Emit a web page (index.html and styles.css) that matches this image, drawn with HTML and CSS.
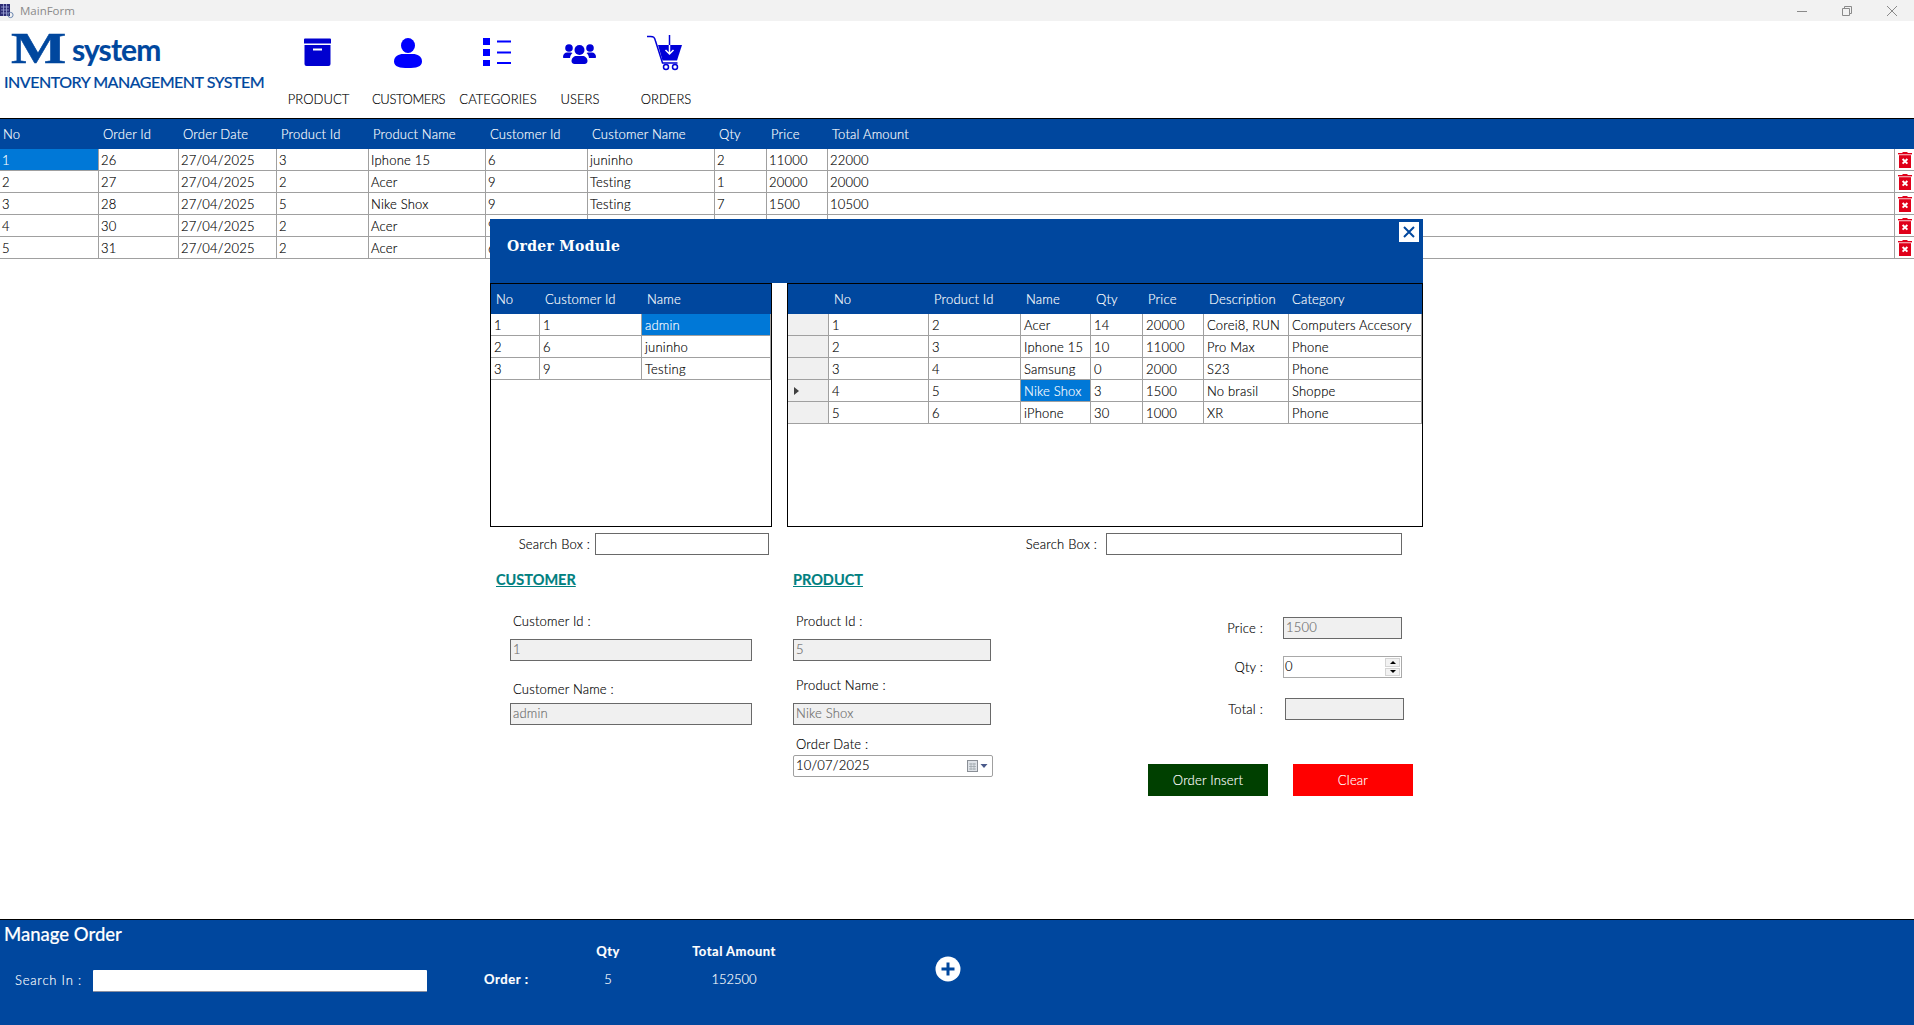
FILE: index.html
```html
<!DOCTYPE html>
<html lang="en">
<head>
<meta charset="utf-8">
<title>MainForm</title>
<link rel="stylesheet" href="styles.css">
</head>
<body>
<svg class="defs" width="0" height="0" aria-hidden="true">
  <symbol id="trash" viewBox="0 0 14 16">
    <rect x="4.5" y="0" width="5" height="1" fill="#e0001a"/>
    <rect x="0" y="1" width="14" height="1.4" fill="#e0001a"/>
    <rect x="1" y="3.2" width="12" height="12.8" fill="#e0001a"/>
    <path d="M4.6 7l4.8 4.6M9.4 7l-4.8 4.6" stroke="#fff" stroke-width="2" fill="none"/>
  </symbol>
</svg>
<div class="titlebar">
  <svg class="app-icon" viewBox="0 0 14 16"><rect x="0" y="1" width="10" height="12" fill="#2c2c74"/><path d="M1 4h8M1 7h8M1 10h8M3.500 1v12M6.500 1v12" stroke="#9fa6d8" stroke-width=".8"/><circle cx="10.500" cy="12" r="2.600" fill="none" stroke="#6a86b0"/></svg>
  <span class="app-name">MainForm</span>
  <div class="win-controls">
    <svg viewBox="0 0 10 10"><path d="M0 5.500h10" stroke="#8a8a8a"/></svg>
    <svg viewBox="0 0 10 10"><path d="M.5 2.500h7v7h-7zM2.500 2.500v-2h7v7h-2" fill="none" stroke="#8a8a8a"/></svg>
    <svg viewBox="0 0 10 10"><path d="M0 0l10 10M10 0L0 10" stroke="#8a8a8a"/></svg>
  </div>
</div>
<header class="topbar">
  <div class="brand">
    <div class="logo"><span class="logo-m">M</span><span class="logo-word">system</span></div>
    <div class="tagline">INVENTORY MANAGEMENT SYSTEM</div>
  </div>
  <nav class="nav">
    <div class="nav-item w-product">
      <svg class="nav-icon" width="29" height="28" viewBox="0 0 29 28"><path d="M1 1.500a1 1 0 0 1 1-1h25a1 1 0 0 1 1 1v4H1z" fill="#0000d0"/><path d="M1.500 7h26v19a2 2 0 0 1-2 2h-22a2 2 0 0 1-2-2z" fill="#0000d0"/><rect x="10" y="10.500" width="9" height="2" fill="#fff"/></svg>
      <span class="nav-label">PRODUCT</span>
    </div>
    <div class="nav-item w-customers">
      <svg class="nav-icon" width="28" height="30" viewBox="0 0 28 30"><ellipse cx="14" cy="7.500" rx="7" ry="7.500" fill="#0000ff"/><path d="M0 23.500C0 18 5 16 9 16h10c4 0 9 2 9 7.500S22 30 14 30 0 29 0 23.500z" fill="#0000ff"/></svg>
      <span class="nav-label nav-tight">CUSTOMERS</span>
    </div>
    <div class="nav-item w-categories">
      <svg class="nav-icon" width="28" height="28" viewBox="0 0 28 28"><path d="M0 0h7v7H0zM0 11h7v7H0zM0 22h7v6H0z" fill="#0000ff"/><path d="M14 3.500h14M14 14.500h14M14 25h14" stroke="#0000ff" stroke-width="2"/></svg>
      <span class="nav-label">CATEGORIES</span>
    </div>
    <div class="nav-item w-users">
      <svg class="nav-icon" width="33" height="20" viewBox="0 0 33 20"><circle cx="6" cy="4" r="3.800" fill="#0000d8"/><circle cx="27" cy="4" r="3.800" fill="#0000d8"/><circle cx="16.500" cy="6" r="5" fill="#0000d8"/><path d="M0 13c0-3 2-4.500 4-4.500h4c.6 0 1 .2 1.500.5-1.500 1.200-2.300 3-2.500 5H1c-.6 0-1-.4-1-1zM33 13c0-3-2-4.500-4-4.500h-4c-.6 0-1 .2-1.500.5 1.500 1.200 2.300 3 2.500 5h6c.6 0 1-.4 1-1z" fill="#0000d8"/><path d="M8.500 17c0-3 2.500-5 5-5h6c2.500 0 5 2 5 5 0 2-1.500 3-3 3h-10c-1.500 0-3-1-3-3z" fill="#0000d8"/></svg>
      <span class="nav-label">USERS</span>
    </div>
    <div class="nav-item w-orders">
      <svg class="nav-icon" width="36" height="36" viewBox="0 0 36 36"><path d="M0 1.500h3.500c3 0 4 .5 5 4.500l7 22h15" fill="none" stroke="#0000d8" stroke-width="1.500"/><path d="M11 10h24l-5 15.500H15.500z" fill="#0000d8"/><path d="M22.500 0v10" stroke="#0000d8" stroke-width="1.500"/><path d="M22.500 10v9M18.500 15l4 4 4-4" fill="none" stroke="#fff" stroke-width="1.500"/><circle cx="19" cy="32" r="2.500" fill="none" stroke="#0000d8" stroke-width="1.500"/><circle cx="28" cy="32" r="2.500" fill="none" stroke="#0000d8" stroke-width="1.500"/></svg>
      <span class="nav-label">ORDERS</span>
    </div>
  </nav>
</header>
<main class="content">
  <table class="grid main-grid">
    <colgroup><col class="m1"><col class="m2"><col class="m3"><col class="m4"><col class="m5"><col class="m6"><col class="m7"><col class="m8"><col class="m9"><col><col class="m11"></colgroup>
    <thead><tr><th>No</th><th>Order Id</th><th>Order Date</th><th>Product Id</th><th>Product Name</th><th>Customer Id</th><th>Customer Name</th><th>Qty</th><th>Price</th><th>Total Amount</th><th></th></tr></thead>
    <tbody>
      <tr><td class="sel">1</td><td>26</td><td>27/04/2025</td><td>3</td><td>Iphone 15</td><td>6</td><td>juninho</td><td>2</td><td>11000</td><td>22000</td><td class="del"><svg class="trash"><use href="#trash"/></svg></td></tr>
      <tr><td>2</td><td>27</td><td>27/04/2025</td><td>2</td><td>Acer</td><td>9</td><td>Testing</td><td>1</td><td>20000</td><td>20000</td><td class="del"><svg class="trash"><use href="#trash"/></svg></td></tr>
      <tr><td>3</td><td>28</td><td>27/04/2025</td><td>5</td><td>Nike Shox</td><td>9</td><td>Testing</td><td>7</td><td>1500</td><td>10500</td><td class="del"><svg class="trash"><use href="#trash"/></svg></td></tr>
      <tr><td>4</td><td>30</td><td>27/04/2025</td><td>2</td><td>Acer</td><td>9</td><td></td><td></td><td></td><td></td><td class="del"><svg class="trash"><use href="#trash"/></svg></td></tr>
      <tr><td>5</td><td>31</td><td>27/04/2025</td><td>2</td><td>Acer</td><td>6</td><td></td><td></td><td></td><td></td><td class="del"><svg class="trash"><use href="#trash"/></svg></td></tr>
    </tbody>
  </table>
  <section class="modal">
    <div class="modal-head">
      <h2 class="modal-title">Order Module</h2>
      <div class="modal-close"><svg width="12" height="12" viewBox="0 0 12 12"><path d="M1 1l10 10M11 1L1 11" stroke="#00479e" stroke-width="2"/></svg></div>
    </div>
    <div class="panels">
      <div class="panel panel-left">
        <table class="grid">
          <colgroup><col class="c1"><col class="c2"><col></colgroup>
          <thead><tr><th>No</th><th>Customer Id</th><th>Name</th></tr></thead>
          <tbody>
            <tr><td>1</td><td>1</td><td class="sel">admin</td></tr>
            <tr><td>2</td><td>6</td><td>juninho</td></tr>
            <tr><td>3</td><td>9</td><td>Testing</td></tr>
          </tbody>
        </table>
      </div>
      <div class="panel panel-right">
        <table class="grid">
          <colgroup><col class="p0"><col class="p1"><col class="p2"><col class="p3"><col class="p4"><col class="p5"><col class="p6"><col></colgroup>
          <thead><tr><th></th><th>No</th><th>Product Id</th><th>Name</th><th>Qty</th><th>Price</th><th>Description</th><th class="th-cat">Category</th></tr></thead>
          <tbody>
            <tr><td class="rowh"></td><td>1</td><td>2</td><td>Acer</td><td>14</td><td>20000</td><td>Corei8, RUN</td><td>Computers Accesory</td></tr>
            <tr><td class="rowh"></td><td>2</td><td>3</td><td>Iphone 15</td><td>10</td><td>11000</td><td>Pro Max</td><td>Phone</td></tr>
            <tr><td class="rowh"></td><td>3</td><td>4</td><td>Samsung</td><td>0</td><td>2000</td><td>S23</td><td>Phone</td></tr>
            <tr><td class="rowh"><span class="row-arrow"></span></td><td>4</td><td>5</td><td class="sel">Nike Shox</td><td>3</td><td>1500</td><td>No brasil</td><td>Shoppe</td></tr>
            <tr><td class="rowh"></td><td>5</td><td>6</td><td>iPhone</td><td>30</td><td>1000</td><td>XR</td><td>Phone</td></tr>
          </tbody>
        </table>
      </div>
    </div>
    <div class="search-row">
      <div class="search search-left"><label class="lbl">Search Box :</label><div class="input input-search-l"></div></div>
      <div class="search search-right"><label class="lbl">Search Box :</label><div class="input input-search-r"></div></div>
    </div>
    <div class="form">
      <div class="col-customer">
        <h3 class="section-title">CUSTOMER</h3>
        <label class="lbl f-lbl first">Customer Id :</label>
        <div class="input ro w-cust first-in">1</div>
        <label class="lbl f-lbl second">Customer Name :</label>
        <div class="input ro w-cust">admin</div>
      </div>
      <div class="col-product">
        <h3 class="section-title">PRODUCT</h3>
        <label class="lbl f-lbl first">Product Id :</label>
        <div class="input ro w-prod first-in">5</div>
        <label class="lbl f-lbl p-second">Product Name :</label>
        <div class="input ro w-prod first-in">Nike Shox</div>
        <label class="lbl f-lbl p-third">Order Date :</label>
        <div class="date">10/07/2025
          <span class="date-btn">
            <svg width="22" height="13" viewBox="0 0 22 13"><rect x=".5" y=".5" width="10" height="11" fill="#dfe3e8" stroke="#8a8f96"/><path d="M2 4h7M2 6.500h7M2 9h7M4 3v7M7 3v7" stroke="#9aa0a8" stroke-width=".7"/><path d="M13.500 4h7l-3.500 4z" fill="#4a5a8a"/></svg>
          </span>
        </div>
      </div>
      <div class="col-totals">
        <div class="tot-row tot-price"><label class="lbl tot-lbl">Price :</label><div class="input ro w-tot">1500</div></div>
        <div class="tot-row tot-qty"><label class="lbl tot-lbl">Qty :</label>
          <div class="input spin w-tot">0
            <span class="spin-btns"><span class="spin-up"></span><span class="spin-down"></span></span>
          </div>
        </div>
        <div class="tot-row tot-total"><label class="lbl tot-lbl">Total :</label><div class="input ro w-tot shift"></div></div>
        <div class="actions">
          <button class="btn btn-green" type="button">Order Insert</button>
          <button class="btn btn-red" type="button">Clear</button>
        </div>
      </div>
    </div>
  </section>
</main>
<footer class="footer">
  <div class="manage-title">Manage Order</div>
  <div class="footer-body">
    <div class="foot-search"><label class="foot-lbl">Search In :</label><div class="foot-input"></div></div>
    <div class="foot-order">Order :</div>
    <div class="foot-stat stat-qty"><span class="stat-head">Qty</span><span class="stat-val">5</span></div>
    <div class="foot-stat stat-total"><span class="stat-head">Total Amount</span><span class="stat-val">152500</span></div>
    <svg class="foot-add" width="26" height="26" viewBox="0 0 26 26"><circle cx="13" cy="13" r="12.500" fill="#fff"/><path d="M13 6.500v13M6.500 13h13" stroke="#00479e" stroke-width="3"/></svg>
  </div>
</footer>
</body>
</html>
```
FILE: styles.css
```css
* { box-sizing: border-box; }
html, body { margin: 0; height: 100%; }
body {
  display: flex;
  flex-direction: column;
  height: 1025px;
  overflow: hidden;
  background: #fff;
  color: #000;
  font-family: Lato, "Liberation Sans", sans-serif;
  font-size: 13px;
  font-weight: 300;
  letter-spacing: .2px;
  -webkit-text-stroke: .15px;
}
.defs { position: absolute; }

.titlebar {
  flex: 0 0 21px;
  display: flex;
  align-items: center;
  background: #f2f2f2;
  color: #8a8a8a;
  font-family: "Open Sans", sans-serif;
  font-size: 11.500px;
  font-weight: 400;
  letter-spacing: 0;
  -webkit-text-stroke: 0;
}
.app-icon { width: 14px; height: 16px; margin-right: 6px; }
.win-controls { margin-left: auto; display: flex; gap: 35px; margin-right: 17px; }
.win-controls svg { width: 10px; height: 10px; }

.topbar { flex: 0 0 97px; display: flex; }
.brand { width: 273px; padding-left: 4px; }
.logo { display: flex; align-items: flex-end; height: 46px; color: #00479e; }
.logo-m {
  font-family: "Liberation Serif", serif;
  font-weight: 700;
  font-size: 45px;
  line-height: 38px;
  width: 69px;
  text-align: center;
  display: inline-block;
  letter-spacing: 0;
  -webkit-text-stroke: .5px;
  transform: scaleX(1.3);
}
.logo-word {
  font-weight: 700;
  font-size: 30px;
  line-height: 37px;
  letter-spacing: -.9px;
  margin-bottom: -1px;
  margin-left: -1px;
}
.tagline {
  margin-top: 7px;
  color: #00479e;
  font-size: 16px;
  font-weight: 500;
  line-height: 16px;
  letter-spacing: -.5px;
  white-space: nowrap;
}
.nav { display: flex; }
.nav-item { position: relative; display: flex; flex-direction: column; align-items: center; height: 97px; }
.w-product { width: 91px; }
.w-customers { width: 89px; }
.w-categories { width: 90px; }
.w-users { width: 74px; }
.w-orders { width: 98px; }
.nav-icon { position: absolute; top: 17px; margin-left: -2px; }
.w-users .nav-icon { top: 23px; }
.w-orders .nav-icon { top: 14px; }
.nav-label { margin-top: 70px; line-height: 16px; font-size: 13px; letter-spacing: .05px; }
.nav-tight { letter-spacing: -.4px; }

.content { position: relative; flex: 1 1 auto; border-top: 1px solid #000; min-height: 0; }

.grid { width: 100%; border-collapse: separate; border-spacing: 0; table-layout: fixed; font-size: 13px; }
.grid th {
  height: 30px;
  padding: 0 0 0 5px;
  background: #00479e;
  color: #fff;
  font-weight: 300;
  text-align: left;
  white-space: nowrap;
}
.main-grid th { padding-left: 4px; }
.main-grid th:first-child { padding-left: 3px; }
.grid th.th-cat { padding-left: 3px; }
.grid td {
  height: 22px;
  padding: 0 0 0 3px;
  border-right: 1px solid #a0a0a0;
  border-bottom: 1px solid #a0a0a0;
  white-space: nowrap;
  overflow: hidden;
  line-height: 20px;
}
.main-grid td { padding-left: 2px; }
.grid td.sel { background: #0078d7; color: #fff; }
.grid td.rowh { background: #f0f0f0; padding: 0; position: relative; }
.row-arrow {
  display: block;
  width: 0;
  height: 0;
  margin-left: 6px;
  border-left: 5px solid #404040;
  border-top: 4px solid transparent;
  border-bottom: 4px solid transparent;
}
.grid td.del { padding: 0; border-right: 0; }
.trash { display: block; width: 14px; height: 16px; margin-left: 3px; }

.m1 { width: 99px; } .m2 { width: 80px; } .m3 { width: 98px; } .m4 { width: 92px; }
.m5 { width: 117px; } .m6 { width: 102px; } .m7 { width: 127px; } .m8 { width: 52px; }
.m9 { width: 61px; } .m11 { width: 19px; }

.c1 { width: 49px; } .c2 { width: 102px; }
.p0 { width: 41px; } .p1 { width: 100px; } .p2 { width: 92px; } .p3 { width: 70px; }
.p4 { width: 52px; } .p5 { width: 61px; } .p6 { width: 85px; }

.modal {
  position: absolute;
  left: 490px;
  top: 100px;
  width: 933px;
  height: 610px;
  background: #fff;
}
.modal-head { position: relative; height: 64px; background: #00479e; padding: 17px 0 0 17px; }
.modal-title {
  margin: 0;
  color: #fff;
  font-family: "DejaVu Serif", serif;
  font-size: 14px;
  font-weight: 700;
  line-height: 20px;
  letter-spacing: .3px;
  -webkit-text-stroke: 0;
}
.modal-close {
  position: absolute;
  right: 4px;
  top: 3px;
  width: 20px;
  height: 20px;
  background: #fff;
  display: flex;
  align-items: center;
  justify-content: center;
}
.panels { display: flex; gap: 15px; height: 244px; }
.panel { border: 1px solid #000; height: 100%; overflow: hidden; }
.panel-left { width: 282px; }
.panel-right { width: 636px; }

.lbl { font-size: 13px; line-height: 16px; white-space: nowrap; display: block; }
.input {
  height: 22px;
  border: 1px solid #696969;
  background: #fff;
  font-size: 13px;
  line-height: 18px;
  padding-left: 2px;
}
.ro { background: #f0f0f0; color: #6d6d6d; }

.search-row { display: flex; margin-top: 6px; height: 22px; }
.search { display: flex; align-items: center; justify-content: flex-end; gap: 5px; }
.search-left { width: 297px; padding-right: 18px; }
.search-right { width: 636px; padding-right: 21px; gap: 9px; }
.input-search-l { width: 174px; }
.input-search-r { width: 296px; }

.form { display: flex; }
.col-customer { width: 297px; padding-left: 6px; }
.col-product { width: 213px; padding-left: 6px; }
.col-totals { flex: 1; }
.section-title {
  margin: 17px 0 0;
  color: #008080;
  font-size: 14.500px;
  line-height: 16px;
  font-weight: 700;
  letter-spacing: 0;
  text-decoration: underline;
}
.f-lbl { margin-left: 17px; }
.col-product .f-lbl { margin-left: 3px; }
.first { margin-top: 25px; }
.first-in { margin-top: 10px; }
.second { margin-top: 20px; margin-bottom: 6px; }
.p-second { margin-top: 16px; }
.p-third { margin-top: 11px; margin-bottom: 3px; }
.w-cust { width: 242px; margin-left: 14px; }
.w-prod { width: 198px; }
.date {
  position: relative;
  width: 200px;
  height: 22px;
  border: 1px solid #a0a0a0;
  border-radius: 2px;
  font-size: 13px;
  line-height: 19px;
  padding-left: 2px;
}
.date-btn { position: absolute; right: 3px; top: 4px; display: flex; }

.tot-row { display: flex; align-items: center; height: 22px; }
.tot-lbl { width: 263px; text-align: right; margin: 0 20px 1px 0; }
.tot-price { margin-top: 62px; }
.tot-qty { margin-top: 17px; }
.tot-total { margin-top: 20px; }
.w-tot { width: 119px; }
.shift { margin-left: 2px; }
.spin { position: relative; border-color: #a9a9a9; padding-left: 1px; }
.spin-btns { position: absolute; right: 1px; top: 1px; width: 15px; height: 18px; display: flex; flex-direction: column; gap: 1px; }
.spin-up, .spin-down {
  flex: 1;
  display: flex;
  align-items: center;
  justify-content: center;
  background: #f2f2f2;
  border: 1px solid #d4d4d4;
}
.spin-up::after { content: ""; border: 3px solid transparent; border-bottom: 3px solid #000; border-top: 0; }
.spin-down::after { content: ""; border: 3px solid transparent; border-top: 3px solid #000; border-bottom: 0; }

.actions { display: flex; gap: 25px; margin: 44px 0 0 148px; }
.btn {
  width: 120px;
  height: 32px;
  border: 0;
  color: #fff;
  font-family: inherit;
  font-size: 13px;
  font-weight: 300;
  letter-spacing: .2px;
  padding: 0;
}
.btn-green { background: #004000; }
.btn-red { background: #ff0000; }

.footer {
  flex: 0 0 106px;
  border-top: 1px solid #000;
  background: #00479e;
  color: #fff;
  position: relative;
}
.manage-title { padding: 4px 0 0 4px; font-size: 18.500px; line-height: 20px; font-weight: 500; letter-spacing: 0; }
.footer-body { display: flex; margin-top: -1px; height: 52px; position: relative; }
.foot-search { display: flex; align-items: center; margin: 27px 0 0 15px; gap: 11px; height: 22px; }
.foot-lbl { width: 67px; font-size: 13px; white-space: nowrap; letter-spacing: .8px; margin-bottom: 2px; }
.foot-input { width: 334px; height: 22px; background: #fff; border-radius: 1px; border-bottom: 1px solid #8a8fa0; }
.foot-order { margin: 28px 0 0 57px; font-weight: 700; font-size: 13px; line-height: 16px; width: 111px; letter-spacing: .6px; }
.foot-stat { display: flex; flex-direction: column; align-items: center; font-size: 13px; }
.stat-head { font-weight: 700; line-height: 16px; white-space: nowrap; letter-spacing: .5px; }
.stat-val { margin-top: 12px; line-height: 16px; letter-spacing: 0; }
.stat-qty { width: 26px; }
.stat-total { width: 92px; margin-left: 67px; }
.foot-add { margin: 13px 0 0 155px; }
```
